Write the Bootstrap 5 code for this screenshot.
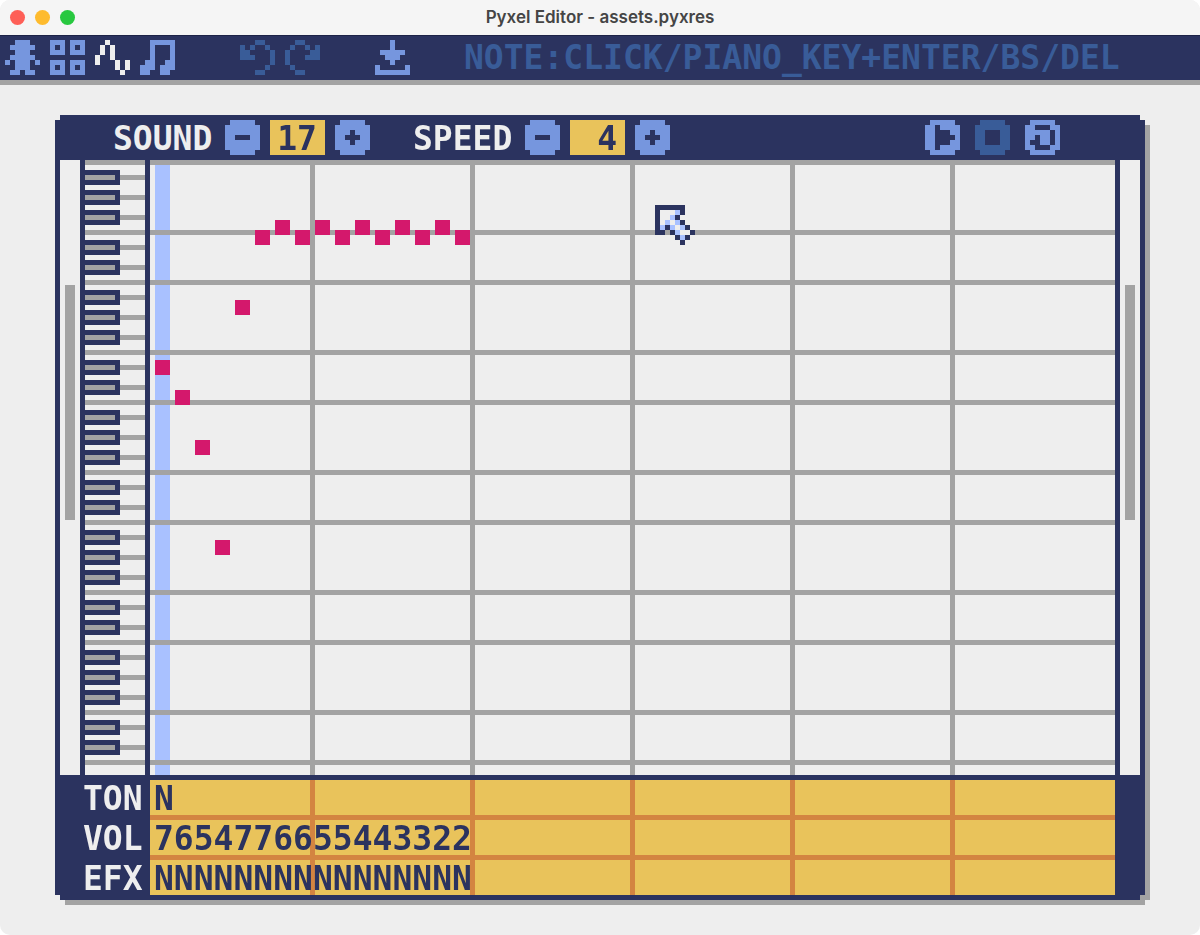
<!DOCTYPE html>
<html lang="en">
<head>
<meta charset="utf-8">
<meta name="viewport" content="width=device-width, initial-scale=1">
<title>Pyxel Editor - assets.pyxres</title>
<link href="https://cdn.jsdelivr.net/npm/bootstrap@5.3.0/dist/css/bootstrap.min.css" rel="stylesheet">
<style>
:root{--navy:#2b335f;--dim:#395c98;--sky:#7696de;--pale:#a9c1ff;--gray:#a3a3a3;--paper:#eee;--gold:#e9c35b;--rust:#d38441;--pink:#d4186c}
body{background:#fff}
.app-window{min-height:100vh;background:var(--paper);border-radius:10px;overflow:hidden}
.title-bar{height:35px;background:#f5f5f5;padding:0 10px}
.title-bar h1{font:600 17px/35px Inter,sans-serif;color:#454545;margin:0}
.dots{gap:10px;padding-left:10px}
.light{width:15px;height:15px;border-radius:50%}
.tool-bar{height:50px;background:var(--navy);box-shadow:inset 0 1px #1d2347;border-bottom:5px solid var(--gray);padding:0 5px}
.pix{font-family:"DejaVu Sans Mono",monospace;font-weight:700;font-size:33px;line-height:35px;white-space:pre}
.tool-bar .pix{color:var(--dim);margin-left:54px}
.icon-btn{border:0;padding:0;background:none;color:var(--sky);width:35px;height:35px;flex:none;display:block}
.icon-btn svg{display:block;width:35px;height:35px;fill:currentColor;shape-rendering:crispEdges}
.icon-btn.active{color:var(--paper)}
.icon-btn:disabled{color:var(--dim)}
.tabs{gap:10px}
.history{gap:10px;margin-left:65px}
.save{margin-left:55px}
main{padding:30px 55px 35px}
.drop{filter:drop-shadow(5px 5px 0 var(--gray))}
.panel{background:var(--navy);color:var(--paper);clip-path:polygon(5px 0,calc(100% - 5px) 0,calc(100% - 5px) 5px,100% 5px,100% calc(100% - 5px),calc(100% - 5px) calc(100% - 5px),calc(100% - 5px) 100%,5px 100%,5px calc(100% - 5px),0 calc(100% - 5px),0 5px,5px 5px)}
.panel label{height:35px;line-height:37px}
.panel input{height:35px;border:0;border-radius:0;color:var(--navy)}
.controls{height:45px;padding:0 85px 0 58px}
.fields{gap:43px}
.field{gap:10px}
.field label{width:102px}
.field input{width:55px;background:var(--gold);padding:2px 8px 0 0;text-align:right}
.transport{gap:15px}
.stage{gap:5px;padding:0 5px;height:615px}
.scroll-track{width:20px;background:var(--paper);padding:125px 5px 0}
.scroll-thumb{height:235px;background:var(--gray)}
.keys{width:60px;background:var(--paper)}
.keys svg{display:block;width:60px;height:100%;shape-rendering:crispEdges}
.roll{background:
 repeating-linear-gradient(90deg,transparent 0 155px,var(--gray) 155px 160px) 5px 0/calc(100% - 10px) 100% no-repeat,
 repeating-linear-gradient(var(--gray) 0 5px,transparent 5px 70px,var(--gray) 70px 75px,transparent 75px 120px),
 linear-gradient(var(--pale),var(--pale)) 5px 0/15px 100% no-repeat,
 var(--paper)}
.note{position:absolute;width:15px;height:15px;background:var(--pink)}
.pointer{position:absolute;left:505px;top:45px;width:40px;height:40px;shape-rendering:crispEdges}
.params{padding:5px 30px}
.param-names{width:65px}
.param-names label{margin:0 -2px}
.param-names,.param-values{gap:5px}
.param-values{background:
 repeating-linear-gradient(90deg,transparent 0 155px,var(--rust) 155px 160px) 5px 0/calc(100% - 10px) 100% no-repeat,
 repeating-linear-gradient(transparent 0 35px,var(--rust) 35px 40px),
 var(--gold)}
.param-values input{background:none;padding:2px 0 0 4px;width:100%}
</style>
</head>
<body>
<div class="app-window">
  <header class="title-bar position-relative d-flex align-items-center justify-content-center">
    <div class="dots d-flex position-absolute start-0">
      <span class="light" style="background:#fe5f57"></span><span class="light" style="background:#febb2e"></span><span class="light" style="background:#28c840"></span>
    </div>
    <h1>Pyxel Editor - assets.pyxres</h1>
  </header>

  <nav class="tool-bar d-flex align-items-center" aria-label="Editors">
    <div class="tabs d-flex">
      <button class="icon-btn" type="button" aria-label="Image editor"><svg viewBox="0 0 7 7"><path d="M2 0h3v1h1v1h-1v1h1v1h1v1h-1v-1h-1v2h1v1h-2v-1h-1v1h-2v-1h1v-2h-1v1h-1v-1h1v-1h1v-1h-1v-1h1z"/></svg></button>
      <button class="icon-btn" type="button" aria-label="Tilemap editor"><svg viewBox="0 0 7 7"><path fill-rule="evenodd" d="M0 0h3v3h-3zM1 1h1v1h-1zM4 0h3v3h-3zM5 1h1v1h-1zM0 4h3v3h-3zM1 5h1v1h-1zM4 4h3v3h-3zM5 5h1v1h-1z"/></svg></button>
      <button class="icon-btn active" type="button" aria-label="Sound editor"><svg viewBox="0 0 7 7"><path d="M0 3h1v2h-1zM1 1h1v2h-1zM2 0h1v1h-1zM3 1h1v3h-1zM4 4h1v2h-1zM5 6h1v1h-1zM6 4h1v2h-1z"/></svg></button>
      <button class="icon-btn" type="button" aria-label="Music editor"><svg viewBox="0 0 7 7"><path d="M2 0h5v6h-1v1h-2v-2h1v-1h1v-3h-3v5h-1v1h-2v-2h1v-1h1z"/></svg></button>
    </div>
    <div class="history d-flex">
      <button class="icon-btn" type="button" disabled aria-label="Undo"><svg viewBox="0 0 7 7"><path d="M3 0h2v1h-2zM0 1h1v1h1v1h1v1h-3zM2 1h1v1h-1zM5 1h1v1h-1zM6 2h1v3h-1zM5 5h1v1h-1zM3 6h2v1h-2z"/></svg></button>
      <button class="icon-btn" type="button" disabled aria-label="Redo"><svg viewBox="0 0 7 7"><path d="M2 0h2v1h-2zM7 1h-1v1h-1v1h-1v1h3zM4 1h1v1h-1zM1 1h1v1h-1zM0 2h1v3h-1zM1 5h1v1h-1zM2 6h2v1h-2z"/></svg></button>
    </div>
    <button class="icon-btn save" type="button" aria-label="Save"><svg viewBox="0 0 7 7"><path d="M3 0h1v2h2v1h-1v1h-1v1h-1v-1h-1v-1h-1v-1h2zM0 5h1v1h5v-1h1v2h-7z"/></svg></button>
    <span class="pix">NOTE:CLICK/PIANO_KEY+ENTER/BS/DEL</span>
  </nav>

  <main>
    <div class="drop">
      <section class="panel">
        <div class="controls d-flex align-items-center justify-content-between">
          <div class="fields d-flex">
            <div class="field d-flex">
              <label class="pix" for="sound">SOUND</label>
              <button class="icon-btn" type="button" aria-label="Previous sound"><svg viewBox="0 0 7 7"><path fill-rule="evenodd" d="M1 0h5v1h1v5h-1v1h-5v-1h-1v-5h1zM2 3h3v1h-3z"/></svg></button>
              <input class="pix" id="sound" value="17">
              <button class="icon-btn" type="button" aria-label="Next sound"><svg viewBox="0 0 7 7"><path fill-rule="evenodd" d="M1 0h5v1h1v5h-1v1h-5v-1h-1v-5h1zM3 2h1v1h1v1h-1v1h-1v-1h-1v-1h1z"/></svg></button>
            </div>
            <div class="field d-flex">
              <label class="pix" for="speed">SPEED</label>
              <button class="icon-btn" type="button" aria-label="Slower"><svg viewBox="0 0 7 7"><path fill-rule="evenodd" d="M1 0h5v1h1v5h-1v1h-5v-1h-1v-5h1zM2 3h3v1h-3z"/></svg></button>
              <input class="pix" id="speed" value="4">
              <button class="icon-btn" type="button" aria-label="Faster"><svg viewBox="0 0 7 7"><path fill-rule="evenodd" d="M1 0h5v1h1v5h-1v1h-5v-1h-1v-5h1zM3 2h1v1h1v1h-1v1h-1v-1h-1v-1h1z"/></svg></button>
            </div>
          </div>
          <div class="transport d-flex">
            <button class="icon-btn" type="button" aria-label="Play"><svg viewBox="0 0 7 7"><path fill-rule="evenodd" d="M1 0h5v1h1v5h-1v1h-5v-1h-1v-5h1zM2 1h1v1h2v1h1v1h-1v1h-2v1h-1z"/></svg></button>
            <button class="icon-btn" type="button" disabled aria-label="Stop"><svg viewBox="0 0 7 7"><path fill-rule="evenodd" d="M1 0h5v1h1v5h-1v1h-5v-1h-1v-5h1zM2 2h3v3h-3z"/></svg></button>
            <button class="icon-btn" type="button" aria-label="Loop"><svg viewBox="0 0 7 7"><path fill-rule="evenodd" d="M1 0h5v1h1v5h-1v1h-5v-1h-1v-5h1zM2 1h3v1h1v3h-1v1h-3v-1h-1v-1h1v-1h1v2h2v-3h-3z"/></svg></button>
          </div>
        </div>

        <div class="stage d-flex">
          <div class="scroll-track"><div class="scroll-thumb"></div></div>
          <div class="keys">
            <svg aria-label="Piano keyboard" role="img">
              <defs>
                <pattern id="octave" width="60" height="120" patternUnits="userSpaceOnUse">
                  <path fill="#a3a3a3" d="M0 0h60v5H0zM0 70h60v5H0zM35 15h25v5H35zM35 35h25v5H35zM35 55h25v5H35zM35 85h25v5H35zM35 105h25v5H35z"/>
                  <path fill="#2b335f" d="M0 10h35v15H0zM0 30h35v15H0zM0 50h35v15H0zM0 80h35v15H0zM0 100h35v15H0z"/>
                  <path fill="#a3a3a3" d="M0 15h30v5H0zM0 35h30v5H0zM0 55h30v5H0zM0 85h30v5H0zM0 105h30v5H0z"/>
                </pattern>
              </defs>
              <rect width="60" height="605" fill="url(#octave)"/>
            </svg>
          </div>
          <div class="roll position-relative flex-fill" id="roll">
            <svg class="pointer" viewBox="0 0 8 8" aria-hidden="true">
              <path fill="#eee" d="M1 1h4v1H1zM1 2h3v1H1zM1 3h4v1H1zM3 4h3v1H3zM4 5h3v1H4z"/>
              <path fill="#a9c1ff" d="M4 1h1v1h-1zM3 2h1v1h-1zM2 3h1v1h-1zM4 3h1v1h-1zM1 4h1v1h-1zM3 4h1v1h-1zM5 4h1v1h-1zM4 5h1v1h-1zM5 6h1v1h-1z"/>
              <path fill="#2b335f" d="M0 0h6v2h-1v-1h-4v4h1v1h-2zM4 2h1v1h-1zM5 3h1v1h-1zM2 4h1v1h-1zM6 4h1v1h-1zM3 5h1v1h-1zM7 5h1v1h-1zM4 6h1v1h-1zM6 6h1v1h-1zM5 7h1v1h-1z"/>
            </svg>
          </div>
          <div class="scroll-track"><div class="scroll-thumb"></div></div>
        </div>

        <div class="params d-flex">
          <div class="param-names d-flex flex-column">
            <label class="pix" for="ton">TON</label>
            <label class="pix" for="vol">VOL</label>
            <label class="pix" for="efx">EFX</label>
          </div>
          <div class="param-values d-flex flex-column flex-fill">
            <input class="pix" id="ton" value="N">
            <input class="pix" id="vol" value="7654776655443322">
            <input class="pix" id="efx" value="NNNNNNNNNNNNNNNN">
          </div>
        </div>
      </section>
    </div>
  </main>
</div>
<script src="https://cdn.jsdelivr.net/npm/bootstrap@5.3.0/dist/js/bootstrap.bundle.min.js"></script>
<script>
// One entry per step: rows counted down from the top of the roll
const rows = [20, 23, 28, 38, 14, 7, 6, 7, 6, 7, 6, 7, 6, 7, 6, 7];
const roll = document.getElementById('roll');
rows.forEach((row, step) => {
  const note = document.createElement('span');
  note.className = 'note';
  note.style.left = 5 + step * 20 + 'px';
  note.style.top = row * 10 + 'px';
  roll.prepend(note);
});
</script>
</body>
</html>
